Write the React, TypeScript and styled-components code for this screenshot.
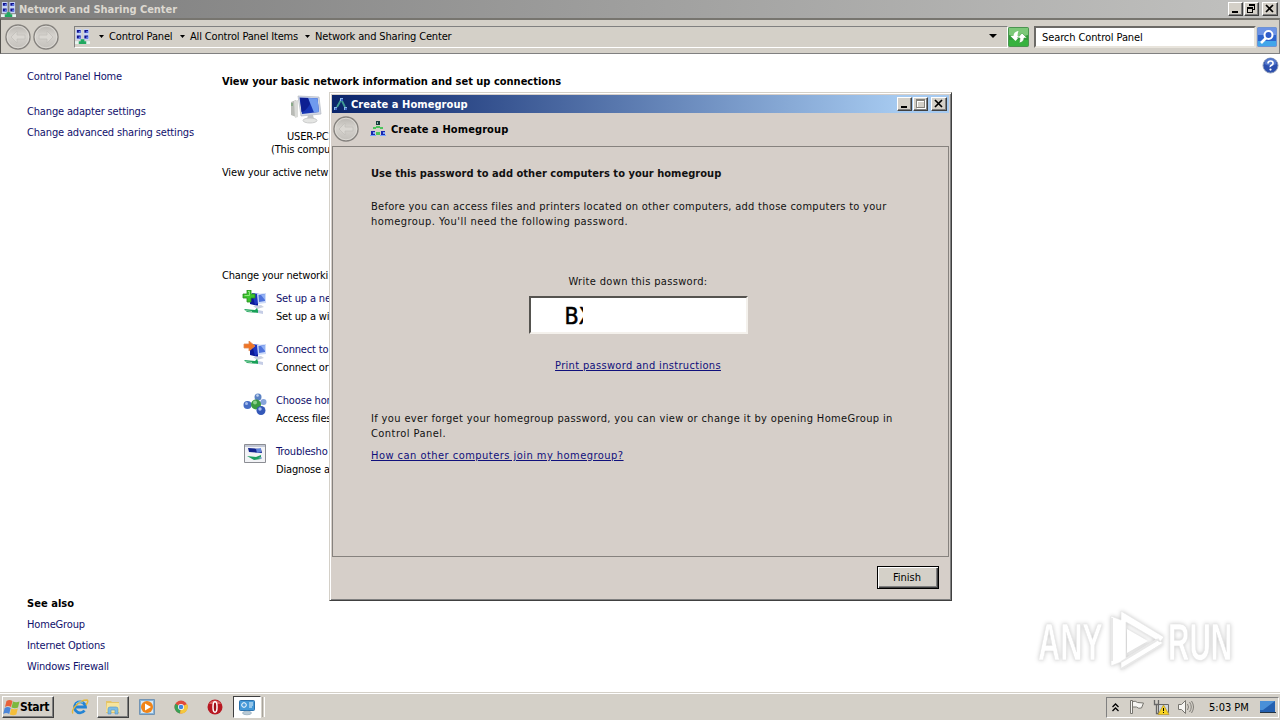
import styled, { createGlobalStyle, css } from "styled-components"

const GlobalStyle = createGlobalStyle`
* {
box-sizing: border-box;
}
body {
margin: 0;
overflow: hidden;
background: #fff;
font-family: "DejaVu Sans Condensed", "DejaVu Sans", sans-serif;
font-stretch: condensed;
font-size: 11px;
color: #000;
}
`

const Text = styled.span<{ $bold?: boolean; $ls?: number; $color?: string }>`
display: block;
white-space: nowrap;
font-weight: ${(p) => (p.$bold ? 700 : 400)};
letter-spacing: ${(p) => p.$ls ?? -0.16}px;
color: ${(p) => p.$color ?? "inherit"};
`

const raised = css`
background: #d4d0c8;
border: 1px solid;
border-color: #fff #404040 #404040 #fff;
box-shadow: inset -1px -1px 0 #808080;
`

const Desktop = styled.div`
position: relative;
display: flex;
flex-direction: column;
width: 1280px;
height: 720px;
`

const TitleBar = styled.header<{ $active?: boolean }>`
display: flex;
align-items: center;
flex: none;
height: 18px;
padding: 0 2px 0 1px;
gap: ${(p) => (p.$active ? 2 : 3)}px;
color: ${(p) => (p.$active ? "#fff" : "#dcd8d0")};
background: ${(p) => (p.$active ? "linear-gradient(90deg, #0a246a, #a6caf0 92%)" : "linear-gradient(90deg, #7d7d7d, #c2c2c0)")};
`

const WindowButtons = styled.div`
display: flex;
margin-left: auto;
gap: 1px;
`

const WindowButton = styled.button<{ $close?: boolean }>`
${raised}
display: flex;
width: ${(p) => (p.$close ? 16 : 15)}px;
height: 14px;
padding: 0;
margin-left: ${(p) => (p.$close ? 2 : 0)}px;
`

const ToolBar = styled.nav`
display: flex;
align-items: center;
flex: none;
height: 36px;
padding: 1px 1px 0 4px;
background: #d4d0c8;
border: 1px solid #808080;
border-top: 2px solid #77756f;
border-left-color: #55534f;
`

const NavButtons = styled.div`
display: flex;
gap: 2px;
margin-right: 15px;
`

const sunken = css`
border: 1px solid;
border-color: #808080 #fff #fff #808080;
`

const AddressBar = styled.div`
${sunken}
display: flex;
align-items: center;
width: 934px;
height: 22px;
padding-bottom: 2px;
`

const Crumb = styled.div<{ $width: number }>`
display: flex;
align-items: center;
flex: none;
width: ${(p) => p.$width}px;
gap: 5px;
`

const SearchBox = styled.div`
display: flex;
align-items: center;
width: 222px;
height: 22px;
margin: 0 1px 0 5px;
padding-left: 6px;
background: #fff;
border: 2px solid;
border-color: #6c6a66 #e8e4dc #e8e4dc #6c6a66;
`

const Page = styled.main`
display: flex;
flex: 1;
min-height: 0;
background: #fff;
`

const SideBar = styled.aside`
display: flex;
flex-direction: column;
width: 222px;
padding: 12px 0 15px 27px;
line-height: 21px;
`

const LinkGroup = styled.div<{ $bottom?: boolean }>`
margin-top: ${(p) => (p.$bottom ? "auto" : "14px")};
`

const Center = styled.section`
display: flex;
flex-direction: column;
flex: 1;
padding-top: 21px;
line-height: 14px;
`

const Computer = styled.div`
display: flex;
flex-direction: column;
margin: 6px 0 10px;
padding-left: 49px;
line-height: 13px;
svg {
margin: 0 0 5px 19px;
}
`

const ComputerName = styled(Text)`
padding-left: 16px;
`

const SectionTitle = styled(Text)`
margin: 89px 0 7px;
`

const Task = styled.div`
display: flex;
height: 51px;
padding-left: 20px;
gap: 8px;
line-height: 18px;
`

const HelpColumn = styled.div`
width: 18px;
padding-top: 3px;
`

const Dialog = styled.section`
position: absolute;
left: 329px;
top: 92px;
display: flex;
flex-direction: column;
width: 623px;
height: 509px;
padding: 1px;
background: #d6cfc9;
border: 1px solid;
border-color: #d4d0c8 #404040 #404040 #d4d0c8;
box-shadow: inset 1px 1px 0 #fff, inset -1px -1px 0 #808080;
`

const DialogFrame = styled.div`
display: flex;
flex-direction: column;
flex: 1;
padding: 1px 1px 0;
`

const DialogHeader = styled.div`
display: flex;
align-items: center;
height: 33px;
padding: 0 0 1px 1px;
`

const DialogBody = styled.div`
display: flex;
flex-direction: column;
height: 411px;
padding: 19px 0 0 38px;
line-height: 15px;
border: 1px solid #86827e;
color: #111;
`

const DialogTitle = styled(Text)`
margin-bottom: 18px;
`

const Password = styled.div`
display: flex;
flex-direction: column;
align-items: center;
width: 534px;
margin: 45px 0 38px;
`

const PasswordField = styled.div`
display: flex;
align-items: center;
width: 219px;
height: 38px;
margin: 7px 0 24px;
padding: 1px 0 0 34px;
background: #fff;
border: 2px solid;
border-color: #55534f #f4f1ec #f4f1ec #55534f;
font-size: 23px;
line-height: 30px;
color: #000;
-webkit-text-stroke: 0.5px #000;
`

const HiddenPart = styled.span`
width: 4px;
overflow: hidden;
`

const Link = styled(Text)`
text-decoration: underline;
text-underline-offset: 1px;
color: #10107c;
`

const HelpLink = styled(Link)`
margin-top: 7px;
`

const DialogFooter = styled.footer`
display: flex;
justify-content: flex-end;
padding: 9px 10px 0 0;
`

const FinishButton = styled.button`
width: 62px;
height: 23px;
padding: 0 2px 1px 0;
font: inherit;
background: #d4d0c8;
border: 1px solid #000;
box-shadow: inset 1px 1px 0 #fff, inset -1px -1px 0 #404040, inset -2px -2px 0 #808080;
`

const Watermark = styled.svg`
position: absolute;
left: 1030px;
top: 600px;
filter: drop-shadow(0 0 2px #c8c8c8);
`

const TaskBar = styled.footer`
display: flex;
align-items: center;
flex: none;
height: 28px;
padding: 2px 1px 0 2px;
background: #d4d0c8;
box-shadow: inset 0 1px 0 #d4d0c8, inset 0 2px 0 #fff;
`

const StartButton = styled.button`
${raised}
display: flex;
align-items: center;
width: 52px;
height: 22px;
margin-right: 17px;
padding: 0;
font: inherit;
font-size: 12px;
`

const TaskButton = styled.div<{ $look?: "up" | "down"; $width: number }>`
display: flex;
align-items: center;
justify-content: center;
width: ${(p) => p.$width}px;
height: 22px;
${(p) => p.$look === "up" && raised}
${(p) =>
    p.$look === "down" &&
    css`
background: #fff;
border: 1px solid;
border-color: #404040 #fff #fff #404040;
`}
`

const Grip = styled.div`
width: 3px;
height: 20px;
margin-left: 1px;
border-right: 1px solid #fff;
border-left: 1px solid #a8a49c;
`

const Tray = styled.div`
${sunken}
display: flex;
align-items: center;
width: 173px;
height: 21px;
margin-left: auto;
padding-left: 5px;
`

const TrayItem = styled.div<{ $width: number }>`
display: flex;
align-items: center;
width: ${(p) => p.$width}px;
`

const links = ["Change adapter settings", "Change advanced sharing settings"]
const seeAlso = ["HomeGroup", "Internet Options", "Windows Firewall"]
const navy = "#10106c"

const NetworkIcon = ({ size = 16 }: { size?: number }) => (
    <svg width={size} height={size} viewBox="0 0 16 16">
        <path fill="#c8d4f4" d="M1 0h6v6H1zM9 0h6v6H9zM1 6h6v6H1zM9 6h6v6H9z" />
        <path fill="#10108c" d="M2 1h4v3H2zM10 1h4v3h-4zM2 7h4v3H2zM10 7h4v3h-4z" />
        <path fill="#5c7cf0" d="M4 2h2v2H4zM12 2h2v2h-2zM4 8h2v2H4zM12 8h2v2h-2z" />
        <path fill="#e8f4f0" d="M0 13h16v3H0z" />
        <path fill="#20a860" d="M6 11h4v2h2v3H4v-3h2z" />
    </svg>
)

const GroupIcon = ({ light }: { light?: boolean }) => (
    <svg width="16" height="16" viewBox="0 0 16 16">
        {light ? (
            <g>
                <path d="M8 4L4 11M9 5l3 6" fill="none" stroke="#3f9c94" strokeWidth="1.8" />
                <path fill="#8cb8e8" d="M7 2h3v3H7zM1 11h3v3H1zM11 11h3v3h-3z" />
                <path fill="#3c64c0" d="M8 3h2v2H8zM2 12h2v2H2zM12 12h2v2h-2z" />
            </g>
        ) : (
            <g>
                <path fill="#173c3c" d="M6 0h4v4H6z" />
                <path fill="#8cb8b0" d="M7 1h1v2H7z" />
                <path fill="#4cc45c" d="M3 6h3v2H3zM10 6h3v2h-3zM6 5h4v2H6zM6 11h4v3H6z" />
                <path fill="#1c28b0" d="M1 10h4v4H1zM11 10h4v4h-4z" />
                <path fill="#78a4fc" d="M3 11h2v2H3zM13 11h2v2h-2zM0 14h6v1H0zM10 14h6v1h-6z" />
            </g>
        )}
    </svg>
)

const RoundArrow = ({ flip }: { flip?: boolean }) => (
    <svg width="26" height="26" viewBox="0 0 26 26">
        <defs>
            <linearGradient id="round" x1="0" y1="0" x2="0" y2="1">
                <stop offset="0" stopColor="#b8b5b0" />
                <stop offset=".45" stopColor="#d6d3ce" />
                <stop offset="1" stopColor="#c2bfba" />
            </linearGradient>
        </defs>
        <circle cx="13" cy="13" r="12" fill="url(#round)" stroke="#85827e" strokeWidth="1.4" />
        <circle cx="13" cy="13" r="10.8" fill="none" stroke="#e2dfda" strokeWidth=".8" />
        <path
            transform={flip ? "translate(26 0) scale(-1 1)" : undefined}
            d="M6 13l6-6v4h8v4h-8v4z"
            fill="#dad7d2"
            stroke="#c2bfba"
            strokeWidth=".8"
        />
    </svg>
)

const DownArrow = ({ size = 5 }: { size?: number }) => (
    <svg width={size} height={size === 5 ? 3 : 4} viewBox="0 0 8 4" preserveAspectRatio="none">
        <path d="M0 0h8L4 4z" />
    </svg>
)

const MinIcon = () => (
    <svg width="13" height="12">
        <path d="M3 8h6v2H3z" />
    </svg>
)

const CloseIcon = () => (
    <svg width="14" height="12">
        <path d="M3 2l7 7M10 2l-7 7" stroke="#000" strokeWidth="1.7" />
    </svg>
)

const MaxIcon = () => (
    <svg width="13" height="12" shapeRendering="crispEdges">
        <path d="M2.5 1v8.5h8V1M2 2h9" fill="none" stroke="#fff" transform="translate(1 1)" />
        <path d="M2.5 1.5h8v8h-8zM2 2.5h9" fill="none" stroke="#85827c" />
    </svg>
)

const RestoreIcon = () => (
    <svg width="13" height="12" shapeRendering="crispEdges">
        <path d="M4.5 3V1.5h5v5H8M4 2.5h6M2.5 4.5h5v5h-5zM2 5.5h6" fill="none" stroke="#000" />
    </svg>
)

const RefreshIcon = () => (
    <svg width="21" height="20" viewBox="0 0 21 20">
        <rect x=".5" y=".5" width="20" height="19" rx="1" fill="#2f9a38" stroke="#4b9450" />
        <path d="M1 1h19v7q-10 4-19 0z" fill="#7cc878" />
        <path d="M1 13h19v6H1z" fill="#36b23e" />
        <path d="M2.500 9h3q0-4 5-5-1 2-1 5h2.500l-4.500 5z" fill="#fff" />
        <path d="M19 11h-3q0 4-5 5 1-2 1-5H9.500L14 6z" fill="#fff" stroke="#3c9a40" strokeWidth=".6" />
    </svg>
)

const SearchIcon = () => (
    <svg width="20" height="20" viewBox="0 0 20 20">
        <rect x=".5" y=".5" width="19" height="19" rx="1" fill="#2d63cc" stroke="#6e93d4" />
        <path d="M1 1h18v7H1z" fill="#6d93e4" />
        <path d="M1 14h18v5H1z" fill="#42a6ea" />
        <path d="M9 11l-5 5" stroke="#fff" strokeWidth="2.6" />
        <circle cx="11.5" cy="8" r="4" fill="#2f5cca" stroke="#fff" strokeWidth="2" />
    </svg>
)

const HelpIcon = () => (
    <svg width="17" height="17" viewBox="0 0 17 17">
        <circle cx="8.5" cy="8.5" r="7.5" fill="#2c4fae" stroke="#8d9bb8" />
        <path d="M2.5 7a6 6 0 0 1 12 0q-6 3-12 0z" fill="#5478cc" />
        <path d="M6 6.5Q6 4 8.6 4T11 6.4Q11 7.6 9.5 8.3T8.5 10" fill="none" stroke="#fff" strokeWidth="1.7" />
        <circle cx="8.5" cy="12.6" r="1.1" fill="#fff" />
    </svg>
)

const ComputerIcon = () => (
    <svg width="33" height="30" viewBox="0 0 33 30">
        <path d="M1 7l5-2v17l-5-2z" fill="#b9bbb6" />
        <path d="M4 6l4-1v17l-3 1z" fill="#dadbd8" />
        <path d="M2 8v3" stroke="#5a9a5c" />
        <path d="M8 1l21 1 2 17-20 2z" fill="#d3d8e4" stroke="#b2b7c2" strokeWidth=".7" />
        <path d="M9.5 2.5L27.5 3.3 29 17l-17 2z" fill="#1736b4" />
        <path d="M18 3l9.500.3L29 17l-5 .5z" fill="#6f9aee" />
        <path d="M10 3h8l2 6q-4 7-8.500 8z" fill="#0d1f92" />
        <path d="M18 20h5l1 4h-7z" fill="#c3c6c9" />
        <ellipse cx="20" cy="25.500" rx="7" ry="2.500" fill="#e4e5e3" stroke="#c0c2c1" strokeWidth=".8" />
    </svg>
)

const Monitors = () => (
    <g>
        <path d="M7 4l8 1v11l-8-2z" fill="#0a1896" />
        <path d="M9 3l8 1v8l-5 3z" fill="#1c35c0" />
        <path d="M14 4l9-1v10l-8 1z" fill="#cfdcf8" />
        <path d="M15.500 5L22 4v7l-6 1z" fill="#4f73dc" />
        <path d="M18 5l4-1v6z" fill="#93b2f4" />
        <path d="M10 16l8-1 3 2-7 2z" fill="#cdd3e2" />
        <path d="M1 19l11 1 2-2 2 5-12-1z" fill="#18a058" />
        <path d="M1 20l8 1v1l-6-1z" fill="#a7dcb6" />
        <path d="M15 20l5 1v3l-5-1z" fill="#c5cde6" />
    </g>
)

const taskIcons = [
    <g key="new">
        <Monitors />
        <path d="M4 0h4v4h4v4H8v4H4V8H0V4h4z" fill="#3cc42e" stroke="#268d20" strokeWidth=".8" />
        <path d="M5 1.500h1.500v4H1.500" fill="none" stroke="#8de87c" />
    </g>,
    <g key="connect">
        <Monitors />
        <path d="M1 3h5V0l6 5-6 5V7H1z" fill="#f07424" stroke="#dd8c58" strokeWidth=".8" />
    </g>,
    <g key="choose">
        <path d="M13 13L5 12M13 13l2-9M13 13l5 6M13 13l7-3" stroke="#9aaabf" strokeWidth="3" />
        <circle cx="15" cy="5" r="3.500" fill="#5b82c4" />
        <circle cx="4.500" cy="13" r="4" fill="#456cc4" />
        <circle cx="20.500" cy="10" r="3" fill="#87a5dc" />
        <circle cx="13" cy="12.500" r="5" fill="#3b9a42" />
        <circle cx="18" cy="18.500" r="4.500" fill="#3458b8" />
        <circle cx="12" cy="10.500" r="2" fill="#8bd08a" />
        <circle cx="17" cy="17" r="1.700" fill="#a8bfee" />
        <circle cx="3.500" cy="11.500" r="1.500" fill="#a4bbea" />
        <circle cx="14.500" cy="3.500" r="1.300" fill="#c3d4f0" />
    </g>,
    <g key="trouble">
        <path d="M1.500 1.500h21v18h-21z" fill="#f2f3f6" stroke="#8b8d93" />
        <path d="M2 2h20v2H2z" fill="#c2c7d4" />
        <path d="M5 5l13 1 1 4-13-1z" fill="#12248e" />
        <path d="M13 6l5-1v4l-4 1z" fill="#6084dc" />
        <path d="M4 13l9 1 5-2v4l-7 1z" fill="#1b9d60" />
        <path d="M15 15l4-1v2z" fill="#a4b3e4" />
    </g>,
]

const tasks = [
    ["Set up a ne", "Set up a wi"],
    ["Connect to", "Connect or"],
    ["Choose hom", "Access files"],
    ["Troublesho", "Diagnose a"],
]

const StartIcon = () => (
    <svg width="17" height="17" viewBox="0 0 17 17">
        <path d="M3.500 2q3-2 6 0L8 8q-3-2-6 0z" fill="#e8623a" />
        <path d="M10 2.500q3 1.500 6.500 0L15 8.500q-3 1.500-6.500 0z" fill="#7cb83e" />
        <path d="M1.700 9q3-2 6 0l-1.500 6q-3-2-6 0z" fill="#4c86d8" />
        <path d="M8.300 9.500q3 1.500 6.500 0l-1.500 6q-3 1.500-6.500 0z" fill="#f4be3a" />
    </svg>
)

const IeIcon = () => (
    <svg width="18" height="18" viewBox="0 0 18 18">
        <path d="M13.500 12.500A5.500 5.500 0 1 1 14.500 9H5" fill="none" stroke="#2484d4" strokeWidth="2.800" />
        <path d="M2 15.500Q0 13 5 7.500T16 2q2 1-1 5" fill="none" stroke="#e4b83c" strokeWidth="1.400" />
        <path d="M5 6q3-4 7-1" fill="none" stroke="#74c2f2" />
    </svg>
)

const FolderIcon = () => (
    <svg width="18" height="18" viewBox="0 0 18 18">
        <path d="M2 3h5l1 1h7v11H2z" fill="#e4c468" />
        <path d="M3 5h12l1 9H2z" fill="#f6e49c" />
        <path d="M4 16V11q0-2 2-2h6q2 0 2 2v5h-3v-4H7v4z" fill="#7cbce4" stroke="#5796c4" strokeWidth=".6" />
    </svg>
)

const PlayerIcon = () => (
    <svg width="16" height="16" viewBox="0 0 16 16">
        <path d="M.5.5h15v15H.5z" fill="#86b4da" stroke="#7294b4" />
        <path d="M2 2h12v12H2z" fill="#d8e8f4" />
        <circle cx="8" cy="8" r="6" fill="#f08418" />
        <path d="M6 4.500l6 3.500-6 3.500z" fill="#fff" />
    </svg>
)

const ChromeIcon = () => (
    <svg width="14" height="14" viewBox="0 0 14 14">
        <circle cx="7" cy="7" r="6.500" fill="#e04a3c" />
        <path d="M7 7L1.400 3.700A6.500 6.500 0 0 0 6 13.400z" fill="#38a056" />
        <path d="M7 7l6-3A6.500 6.500 0 0 1 6 13.400z" fill="#f4c83c" />
        <circle cx="7" cy="7" r="3" fill="#fff" />
        <circle cx="7" cy="7" r="2.300" fill="#4286e0" />
    </svg>
)

const OperaIcon = () => (
    <svg width="16" height="16" viewBox="0 0 16 16">
        <circle cx="8" cy="8" r="7.500" fill="#b81822" />
        <path d="M2 5a7 7 0 0 1 12 0z" fill="#dc6060" />
        <ellipse cx="8" cy="8" rx="2" ry="5.200" fill="#a01018" stroke="#fff" strokeWidth="1.500" />
    </svg>
)

const PanelIcon = () => (
    <svg width="18" height="18" viewBox="0 0 18 18">
        <rect x="1.500" y="2.500" width="15" height="10" rx="1" fill="#4499d8" stroke="#2b72ae" />
        <circle cx="6" cy="7" r="2.300" fill="#4a9bdc" stroke="#fff" />
        <path d="M11 5h4M11 7h4M11 9h3" stroke="#e8f4fc" />
        <ellipse cx="9" cy="15" rx="4.500" ry="1.800" fill="#b9cad6" stroke="#89a2b4" strokeWidth=".6" />
    </svg>
)

const FlagIcon = () => (
    <svg width="16" height="16" viewBox="0 0 16 16" fill="#f6f5f2" stroke="#77756f">
        <path d="M3.500 2.500q3-1 5 1l6 .5-2 5q-3 1-5-1h-4z" />
        <path d="M1.500 1.500h2v13h-2z" />
    </svg>
)

const LanIcon = () => (
    <svg width="17" height="16" viewBox="0 0 17 16">
        <path d="M5.500 5.500h10v8h-10z" fill="#cfd6dc" stroke="#666" />
        <path d="M1.500 1v4.500h4V1M3.500 5v9.500h3" fill="none" stroke="#666" strokeWidth="1.300" />
        <path d="M10.500 6l5.500 9.500H5z" fill="#f8d422" stroke="#b4922a" strokeWidth=".7" />
        <path d="M10 9h1v3h-1zM10 13h1v1h-1z" />
    </svg>
)

const SpeakerIcon = () => (
    <svg width="18" height="16" viewBox="0 0 18 16" fill="none" stroke="#77756f">
        <path d="M1.500 5.500h3l4-4v13l-4-4h-3z" fill="#f6f5f2" />
        <path d="M10.500 5q2 3 0 6M12.500 3q3.500 5 0 10M14.500 2q4 6 0 12" strokeWidth=".9" />
    </svg>
)

const App = () => {
    return (
        <>
            <GlobalStyle />
            <Desktop>
                <TitleBar>
                    <NetworkIcon size={15} />
                    <Text $bold $ls={-0.03}>Network and Sharing Center</Text>
                    <WindowButtons>
                        <WindowButton><MinIcon /></WindowButton>
                        <WindowButton><RestoreIcon /></WindowButton>
                        <WindowButton $close><CloseIcon /></WindowButton>
                    </WindowButtons>
                </TitleBar>
                <ToolBar>
                    <NavButtons>
                        <RoundArrow />
                        <RoundArrow flip />
                    </NavButtons>
                    <AddressBar>
                        <Crumb $width={24}><NetworkIcon size={15} /></Crumb>
                        <Crumb $width={81}><DownArrow /><Text>Control Panel</Text></Crumb>
                        <Crumb $width={125}><DownArrow /><Text>All Control Panel Items</Text></Crumb>
                        <Crumb $width={684}><DownArrow /><Text>Network and Sharing Center</Text></Crumb>
                        <DownArrow size={8} />
                    </AddressBar>
                    <RefreshIcon />
                    <SearchBox><Text $ls={-0.1}>Search Control Panel</Text></SearchBox>
                    <SearchIcon />
                </ToolBar>
                <Page>
                    <SideBar>
                        <Text $color={navy}>Control Panel Home</Text>
                        <LinkGroup>
                            {links.map((item) => <Text key={item} $color={navy}>{item}</Text>)}
                        </LinkGroup>
                        <LinkGroup $bottom>
                            <Text $bold $ls={0.05}>See also</Text>
                            {seeAlso.map((item) => <Text key={item} $color={navy}>{item}</Text>)}
                        </LinkGroup>
                    </SideBar>
                    <Center>
                        <Text $bold $ls={0}>View your basic network information and set up connections</Text>
                        <Computer>
                            <ComputerIcon />
                            <ComputerName>USER-PC</ComputerName>
                            <Text>(This compu</Text>
                        </Computer>
                        <Text>View your active netw</Text>
                        <SectionTitle>Change your networki</SectionTitle>
                        {tasks.map(([title, note], i) => (
                            <Task key={title}>
                                <svg width="26" height="26" viewBox="-1 0 26 26">{taskIcons[i]}</svg>
                                <div>
                                    <Text $color={navy}>{title}</Text>
                                    <Text>{note}</Text>
                                </div>
                            </Task>
                        ))}
                    </Center>
                    <HelpColumn><HelpIcon /></HelpColumn>
                </Page>
                <TaskBar>
                    <StartButton><StartIcon /><Text $bold $ls={-0.3}>Start</Text></StartButton>
                    <TaskButton $width={18}><IeIcon /></TaskButton>
                    <TaskButton $width={8} />
                    <TaskButton $width={32} $look="up"><FolderIcon /></TaskButton>
                    <TaskButton $width={36}><PlayerIcon /></TaskButton>
                    <TaskButton $width={32}><ChromeIcon /></TaskButton>
                    <TaskButton $width={36}><OperaIcon /></TaskButton>
                    <TaskButton $width={28} $look="down"><PanelIcon /></TaskButton>
                    <Grip />
                    <Tray>
                        <TrayItem $width={17}>
                            <svg width="7" height="9" fill="none" stroke="#000" strokeWidth="1.300">
                                <path d="M.5 4l3-3 3 3M.5 8l3-3 3 3" />
                            </svg>
                        </TrayItem>
                        <TrayItem $width={24}><FlagIcon /></TrayItem>
                        <TrayItem $width={24}><LanIcon /></TrayItem>
                        <TrayItem $width={32}><SpeakerIcon /></TrayItem>
                        <TrayItem $width={51}><Text $ls={0}>5:03 PM</Text></TrayItem>
                        <svg width="16" height="14">
                            <path d="M0 1h15v11H0z" fill="#2460b0" />
                            <path d="M0 1h15L3 10H0z" fill="#4a90d8" />
                            <path d="M0 12h16v1H0z" fill="#234" />
                        </svg>
                    </Tray>
                </TaskBar>
                <Watermark width="240" height="80" fill="#fff" stroke="#e6e6e6" strokeWidth=".7">
                    <g fontFamily="Liberation Sans Narrow, Liberation Sans, sans-serif" fontSize="52" fontWeight="700">
                        <text transform="translate(8 60) scale(.59 1)">ANY</text>
                        <text transform="translate(138 60) scale(.57 1)">RUN</text>
                    </g>
                    <path d="M91 11l43 26-4 5-34-20v36l31-19 6 4-42 27v-8l-10 4V16l10 4z" fillRule="evenodd" />
                    <path d="M82 18v43M91 62l38-23M91 69l42-25" fill="none" stroke="#e8e8e8" strokeWidth="2" />
                    <path d="M97 29v24l21-12z" fill="#fff" stroke="none" />
                </Watermark>
                <Dialog>
                    <DialogFrame>
                        <TitleBar $active>
                            <GroupIcon light />
                            <Text $bold $ls={0.06}>Create a Homegroup</Text>
                            <WindowButtons>
                                <WindowButton><MinIcon /></WindowButton>
                                <WindowButton><MaxIcon /></WindowButton>
                                <WindowButton $close><CloseIcon /></WindowButton>
                            </WindowButtons>
                        </TitleBar>
                        <DialogHeader>
                            <Crumb $width={37}><RoundArrow /></Crumb>
                            <Crumb $width={200}><GroupIcon /><Text $bold $ls={0.1}>Create a Homegroup</Text></Crumb>
                        </DialogHeader>
                        <DialogBody>
                            <DialogTitle $bold $ls={0.03}>Use this password to add other computers to your homegroup</DialogTitle>
                            <Text $ls={0.28}>Before you can access files and printers located on other computers, add those computers to your</Text>
                            <Text $ls={0.45}>homegroup. You'll need the following password.</Text>
                            <Password>
                                <Text $ls={0.34}>Write down this password:</Text>
                                <PasswordField>B<HiddenPart>X</HiddenPart></PasswordField>
                                <Link $ls={0.33}>Print password and instructions</Link>
                            </Password>
                            <Text $ls={0.36}>If you ever forget your homegroup password, you can view or change it by opening HomeGroup in</Text>
                            <Text $ls={0.45}>Control Panel.</Text>
                            <HelpLink $ls={0.47}>How can other computers join my homegroup?</HelpLink>
                        </DialogBody>
                        <DialogFooter><FinishButton>Finish</FinishButton></DialogFooter>
                    </DialogFrame>
                </Dialog>
            </Desktop>
        </>
    )
}

export default App
